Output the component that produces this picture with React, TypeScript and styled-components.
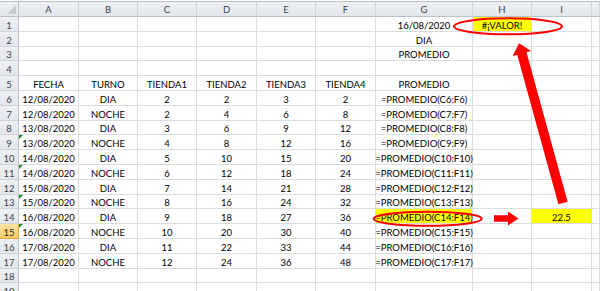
import React from 'react';
import styled, { createGlobalStyle, css } from 'styled-components';

const GlobalStyle = createGlobalStyle`
  html, body {
    margin: 0;
    padding: 0;
    background: #ffffff;
    overflow: hidden;
  }
  body {
    font-family: Lato, "Liberation Sans", sans-serif;
  }
`;

const COL_TEMPLATE = '19px 60px 59px 59px 60px 59px 60px 97px 59px 60px 1fr';
const ROW_HEIGHTS = [16, 15, 15, 14, 15, 15, 15, 15, 14, 15, 15, 15, 15, 14, 15, 15, 15, 15, 14, 15];
const ROW_TEMPLATE = ROW_HEIGHTS.map((h) => `${h}px`).join(' ');

const Frame = styled.div`
  position: relative;
  width: 600px;
  height: 291px;
  overflow: hidden;
  background: #ffffff;
  padding-top: 1px;
  box-sizing: border-box;
`;

const Sheet = styled.div`
  display: grid;
  grid-template-columns: ${COL_TEMPLATE};
  grid-template-rows: ${ROW_TEMPLATE};
  font-size: 9.5px;
  color: #000000;
`;

const headBase = css`
  box-sizing: border-box;
  display: flex;
  justify-content: center;
  align-items: flex-end;
  white-space: nowrap;
  color: #3a4452;
  background: linear-gradient(#eef0f3, #e3e6eb);
`;

const Corner = styled.div`
  ${headBase};
  position: relative;
  border-top: 1px solid #bcc2ca;
  border-right: 1px solid #bcc2ca;
  border-bottom: 1px solid #bcc2ca;
  &::after {
    content: '';
    position: absolute;
    right: 2px;
    bottom: 2px;
    width: 0;
    height: 0;
    border-left: 9px solid transparent;
    border-bottom: 9px solid #c5cad1;
  }
`;

const ColHead = styled.div`
  ${headBase};
  padding-bottom: 1px;
  border-top: 1px solid #bcc2ca;
  border-right: 1px solid #cfd4da;
  border-bottom: 1px solid #bcc2ca;
`;

const RowHead = styled.div<{ $selected?: boolean }>`
  ${headBase};
  border-right: 1px solid #bcc2ca;
  border-bottom: 1px solid #cfd4da;
  ${(p) =>
    p.$selected &&
    css`
      background: linear-gradient(#fbe3a3, #f6c965);
      border-right-color: #e0a83c;
      border-bottom: 1px solid #e0a83c;
      color: #2b2b2b;
    `}
`;

const Cell = styled.div<{ $fill?: string; $flag?: boolean }>`
  box-sizing: border-box;
  position: relative;
  display: flex;
  justify-content: center;
  align-items: flex-end;
  white-space: nowrap;
  border-right: 1px solid #dadcdd;
  border-bottom: 1px solid #dadcdd;
  background: ${(p) => p.$fill ?? 'transparent'};
  ${(p) =>
    p.$flag &&
    css`
      &::before {
        content: '';
        position: absolute;
        left: 0;
        top: 0;
        width: 0;
        height: 0;
        border-top: 4px solid #1c8a1c;
        border-right: 4px solid transparent;
      }
    `}
`;

const Overlay = styled.svg`
  position: absolute;
  left: 0;
  top: 0;
  pointer-events: none;
`;

const COLS = ['A', 'B', 'C', 'D', 'E', 'F', 'G', 'H', 'I', ''];

type CellData = { text?: string; fill?: string; flag?: boolean };

const YELLOW = '#ffff00';

const data: Record<number, CellData[]> = {
  1: [{}, {}, {}, {}, {}, {}, { text: '16/08/2020' }, { text: '#¡VALOR!', fill: YELLOW }, {}, {}],
  2: [{}, {}, {}, {}, {}, {}, { text: 'DIA' }, {}, {}, {}],
  3: [{}, {}, {}, {}, {}, {}, { text: 'PROMEDIO' }, {}, {}, {}],
  5: ['FECHA', 'TURNO', 'TIENDA1', 'TIENDA2', 'TIENDA3', 'TIENDA4', 'PROMEDIO', '', '', ''].map((t) => ({ text: t })),
};

const rowsRaw: [string, string, number, number, number, number][] = [
  ['12/08/2020', 'DIA', 2, 2, 3, 2],
  ['12/08/2020', 'NOCHE', 2, 4, 6, 8],
  ['13/08/2020', 'DIA', 3, 6, 9, 12],
  ['13/08/2020', 'NOCHE', 4, 8, 12, 16],
  ['14/08/2020', 'DIA', 5, 10, 15, 20],
  ['14/08/2020', 'NOCHE', 6, 12, 18, 24],
  ['15/08/2020', 'DIA', 7, 14, 21, 28],
  ['15/08/2020', 'NOCHE', 8, 16, 24, 32],
  ['16/08/2020', 'DIA', 9, 18, 27, 36],
  ['16/08/2020', 'NOCHE', 10, 20, 30, 40],
  ['17/08/2020', 'DIA', 11, 22, 33, 44],
  ['17/08/2020', 'NOCHE', 12, 24, 36, 48],
];

const FLAGGED = new Set([9, 11, 13, 15]);

rowsRaw.forEach((r, i) => {
  const rowNum = i + 6;
  data[rowNum] = [
    { text: r[0], flag: FLAGGED.has(rowNum) },
    { text: r[1] },
    { text: String(r[2]) },
    { text: String(r[3]) },
    { text: String(r[4]) },
    { text: String(r[5]) },
    { text: `=PROMEDIO(C${rowNum}:F${rowNum})`, fill: rowNum === 14 ? YELLOW : undefined },
    {},
    rowNum === 14 ? { text: '22.5', fill: YELLOW } : {},
    {},
  ];
});

const ROW_COUNT = 19;

export default function App() {
  const rows = Array.from({ length: ROW_COUNT }, (_, i) => i + 1);
  return (
    <>
      <GlobalStyle />
      <Frame>
        <Sheet>
          <Corner />
          {COLS.map((c, i) => (
            <ColHead key={`h${i}`}>{c}</ColHead>
          ))}
          {rows.map((r) => {
            const cells = data[r] ?? [];
            return (
              <React.Fragment key={r}>
                <RowHead $selected={r === 15}>{r}</RowHead>
                {COLS.map((_, ci) => {
                  const cd = cells[ci] ?? {};
                  return (
                    <Cell key={ci} $fill={cd.fill} $flag={cd.flag}>
                      {cd.text}
                    </Cell>
                  );
                })}
              </React.Fragment>
            );
          })}
        </Sheet>
        <Overlay width="600" height="291" viewBox="0 0 600 291">
          <ellipse cx="508" cy="26.3" rx="54" ry="8" fill="none" stroke="#ff0000" strokeWidth="2" />
          <ellipse cx="427.7" cy="218.7" rx="54" ry="7" fill="none" stroke="#ff0000" strokeWidth="2" />
          <polygon
            points="494,215.3 508,215.3 508,211.5 518.5,218.5 508,225.5 508,221.7 494,221.7"
            fill="#ff0000"
          />
          <polygon
            points="558.4,204.3 567.6,201.7 526.5,52.3 531.1,51.1 519,43.3 512.7,56.1 517.3,54.9"
            fill="#ff0000"
          />
        </Overlay>
      </Frame>
    </>
  );
}
